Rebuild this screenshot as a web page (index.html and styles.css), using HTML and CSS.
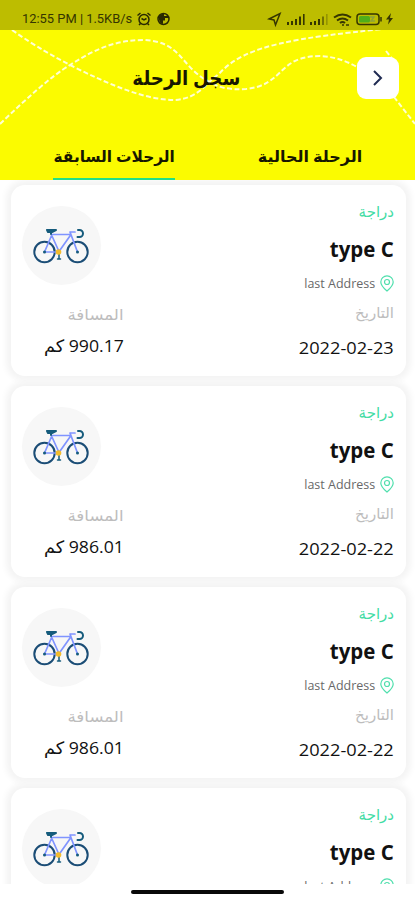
FILE: index.html
```
<!DOCTYPE html>
<html lang="ar" dir="rtl">
<head>
<meta charset="utf-8">
<title>سجل الرحلة</title>
<link rel="stylesheet" href="styles.css">
</head>
<body>
<svg class="defs" width="0" height="0" aria-hidden="true">
  <symbol id="bike" viewBox="0 0 56 38">
    <g fill="none" stroke-linecap="round" stroke-linejoin="round">
      <g stroke="#1b4d76" stroke-width="2"><circle cx="11.5" cy="25" r="10.2"/><circle cx="44.5" cy="25" r="10.2"/></g>
      <path d="M11.5 25 19 7.5H38L26 24.500 19 9M11.500 25H26M37 5l7.500 20M38 5h4" stroke="#8094ff" stroke-width="1.700"/>
      <path d="M14 3h9l-4 2h-4zM18 4v3" stroke="#155b7c" stroke-width="2"/>
      <path d="M45 3h1.500a3.500 3.500 0 0 1 0 7h-2" stroke="#155b7c" stroke-width="2"/>
      <path d="M26 26v6M24.500 32h3" stroke="#155b7c" stroke-width="1.500"/>
    </g>
    <circle cx="11.500" cy="25" r="1.500" fill="#155b7c"/><circle cx="44.500" cy="25" r="1.500" fill="#155b7c"/>
    <circle cx="25.500" cy="25" r="2.800" fill="#f3bc2d"/>
  </symbol>
  <symbol id="pin" viewBox="0 0 14 17">
    <g fill="none" stroke="#50dfad" stroke-width="1.200"><path d="M7 16C4 13.500.8 10.500.8 7a6.200 6.200 0 0 1 12.400 0C13.200 10.500 10 13.500 7 16Z"/><circle cx="7" cy="7" r="2.500"/></g>
  </symbol>
</svg>
<div class="status" dir="ltr">
  <span class="clock">12:55 PM | 1.5KB/s</span>
  <svg class="status-left" viewBox="0 0 36 16" fill="none" stroke="#292900" stroke-width="1.500">
    <circle cx="8" cy="8.500" r="5"/><path d="M5.500 7.500 8 9l2.500-1.500M1.500 4.500l3-2.500M14.500 4.500l-3-2.500M4.500 12.500 3 14M11.500 12.500l1.500 1.500"/>
    <circle cx="27.500" cy="8" r="5.500"/><path d="M23 5.500Q25 2 28 3v2h4.500v2H29v2.500h-2V13Q22 12 23 5.500Z" fill="#292900" stroke="none"/>
  </svg>
  <svg class="status-right" viewBox="0 0 128 18" fill="none" stroke="#363600" stroke-width="1.500">
    <path d="M2 9 13 3.500 8.500 15 7 10Z"/>
    <g fill="#363600" stroke="none"><path d="M20 12h2v3h-2zM24 11h2v4h-2zM28 9h2v6h-2zM32 6.500h2V15h-2zM36 4h1.600v11H36zM43 12h2v3h-2zM47 11h2v4h-2zM51 9h2v6h-2z"/><path opacity=".55" d="M55 6.500h2V15h-2z"/><path opacity=".3" d="M59 4h1.600v11H59z"/></g>
    <path d="M67 7.500q8.500-6 17 0M70 10.500q5.500-4 11 0M73 13q2.500-2 5 0" stroke-width="2"/><path d="M75 15h2M79 15h3" />
    <rect x="90" y="4" width="22" height="10.500" rx="3"/><path d="M114 7v4.500"/>
    <rect x="92" y="6" width="11" height="6.500" rx="1.500" fill="#4fae19" stroke="none"/><path d="M103 7h4l-3 4h4" stroke="#8ca23b"/>
    <path d="m124 3-5 6.500h3l-1 5 5-6.500h-3z" fill="#363600" stroke="none"/>
  </svg>
</div>
<header class="hero">
  <svg class="trails" viewBox="0 30 415 150" fill="none" stroke="#ffffd2" stroke-width="2" stroke-dasharray="5 2.500">
    <path d="M12 30C38 48 53 56 70 65 110 85 145 100 175 100 200 98 205 83 219 74 245 44 300 38 382 29"/>
    <path d="M0 124C25 100 50 77 70 65 98 47 118 40 145 40 181 42 181 66 206 80 218 88 230 90 246 89 285 85 277 56 320 56Q340 57 357 67"/>
    <path d="M386 51l8 10M394 97l21 27"/>
  </svg>
  <div class="title-row"><h1><span>سجل الرحلة</span></h1>
    <div class="back"><svg viewBox="0 0 12 18"><path d="m2 2 7 7-7 7" fill="none" stroke="#202b52" stroke-width="2"/></svg></div>
  </div>
  <nav class="tabs"><div class="tab current"><span>الرحلة الحالية</span></div><div class="tab active"><span>الرحلات السابقة</span></div></nav>
</header>
<main class="list">
  <article class="card">
    <div class="info"><div class="kind"><span>دراجة</span></div><h2><span dir="ltr">type C</span></h2><div class="address"><svg><use href="#pin"/></svg><span dir="ltr">last Address</span></div><div class="label date-label"><span>التاريخ</span></div><div class="date"><span dir="ltr">2022-02-23</span></div></div>
    <div class="side"><div class="avatar"><svg><use href="#bike"/></svg></div><div class="label distance-label"><span>المسافة</span></div><div class="distance"><span>990.17 <b>كم</b></span></div></div>
  </article>
  <article class="card">
    <div class="info"><div class="kind"><span>دراجة</span></div><h2><span dir="ltr">type C</span></h2><div class="address"><svg><use href="#pin"/></svg><span dir="ltr">last Address</span></div><div class="label date-label"><span>التاريخ</span></div><div class="date"><span dir="ltr">2022-02-22</span></div></div>
    <div class="side"><div class="avatar"><svg><use href="#bike"/></svg></div><div class="label distance-label"><span>المسافة</span></div><div class="distance"><span>986.01 <b>كم</b></span></div></div>
  </article>
  <article class="card">
    <div class="info"><div class="kind"><span>دراجة</span></div><h2><span dir="ltr">type C</span></h2><div class="address"><svg><use href="#pin"/></svg><span dir="ltr">last Address</span></div><div class="label date-label"><span>التاريخ</span></div><div class="date"><span dir="ltr">2022-02-22</span></div></div>
    <div class="side"><div class="avatar"><svg><use href="#bike"/></svg></div><div class="label distance-label"><span>المسافة</span></div><div class="distance"><span>986.01 <b>كم</b></span></div></div>
  </article>
  <article class="card">
    <div class="info"><div class="kind"><span>دراجة</span></div><h2><span dir="ltr">type C</span></h2><div class="address"><svg><use href="#pin"/></svg><span dir="ltr">last Address</span></div></div>
    <div class="side"><div class="avatar"><svg><use href="#bike"/></svg></div></div>
  </article>
</main>
<footer class="home"><div></div></footer>
</body>
</html>
```
FILE: styles.css
```
* { box-sizing: border-box; }
body { margin: 0; width: 415px; height: 900px; overflow: hidden; background: #fff; color: #111; font-family: "Open Sans", "DejaVu Sans", sans-serif; display: flex; flex-direction: column; }
.defs { position: absolute; }
svg { display: block; flex: none; }
h1, h2 { margin: 0; }
span { white-space: nowrap; }

.status { height: 30px; flex: none; background: #bdbd00; display: flex; align-items: center; padding: 7px 20px 0 22px; }
.clock { font: 12.9px/16px Roboto, sans-serif; color: #353500; width: 114px; }
.status-left { width: 36px; height: 16px; }
.status-right { width: 128px; height: 18px; margin-left: auto; }

.hero { height: 150px; flex: none; background: #fbfb00; position: relative; }
.trails { position: absolute; inset: 0; width: 415px; height: 150px; }
.title-row { position: relative; height: 96px; display: grid; grid-template-columns: 58px 1fr 58px; align-items: center; }
.title-row h1 { grid-column: 2; grid-row: 1; text-align: center; font-size: 20px; line-height: 30px; color: #171700; padding-right: 42px; }
.back { grid-column: 1; grid-row: 1; width: 42px; height: 42px; margin-right: 16px; border-radius: 9px; background: #fff; display: grid; place-items: center; }
.back svg { width: 12px; height: 18px; }
.tabs { position: relative; height: 54px; display: flex; justify-content: space-between; padding: 0 53px; }
.tab { height: 54px; padding-top: 16px; display: flex; justify-content: center; font-size: 16px; line-height: 28px; font-weight: bold; color: #171700; }
.tab.current { width: 104px; }
.tab.active { width: 122px; border-bottom: 2px solid #20df88; }
.tab span, .title-row h1 span { display: inline-block; }
.title-row h1 span { transform: scaleX(.91); }
.tab.active span { transform: scaleX(.96); }

.list { height: 704px; flex: none; overflow: hidden; padding: 5px 9px 0 11px; display: flex; flex-direction: column; gap: 10px; }
.card { height: 191px; flex: none; border-radius: 14px; background: #fff; box-shadow: 0 0 6px 5px #f4f4f4; display: flex; justify-content: space-between; padding: 0 12px 0 11px; }
.info { padding-top: 11px; width: 150px; }
.info span, .side span { display: inline-block; transform-origin: right center; }
.kind { height: 29px; line-height: 30px; font-size: 15px; color: #43dca4; }
h2 { height: 46px; line-height: 46px; font-size: 22px; }
h2 span { transform: scaleX(.93); }
.address { height: 24px; display: flex; align-items: center; gap: 5px; font-size: 12px; color: #686868; }
.address span { transform: scaleX(1.04); }
.address svg { width: 14px; height: 17px; }
.label { font-size: 15px; color: #bdbdbd; height: 34px; line-height: 34px; }
.date { height: 36px; line-height: 38px; font-size: 17px; }
.date span { transform: scaleX(1.07); }
.side { width: 102px; padding-top: 21px; }
.avatar { width: 79px; height: 79px; border-radius: 50%; background: #f7f7f7; display: grid; place-items: center; margin-right: auto; padding-right: 2px; }
.avatar svg { width: 56px; height: 38px; }
.distance-label { margin-top: 12px; }
.distance-label span { transform: scaleX(1.11); }
.distance { height: 32px; line-height: 30px; font-size: 17px; }
.distance span { transform: scaleX(1.04); }
.distance b { font-weight: normal; }

.home { flex: 1; background: #fff; padding-top: 6px; }
.home div { width: 153px; height: 4px; border-radius: 2px; background: #090909; margin: 0 auto; }
```
